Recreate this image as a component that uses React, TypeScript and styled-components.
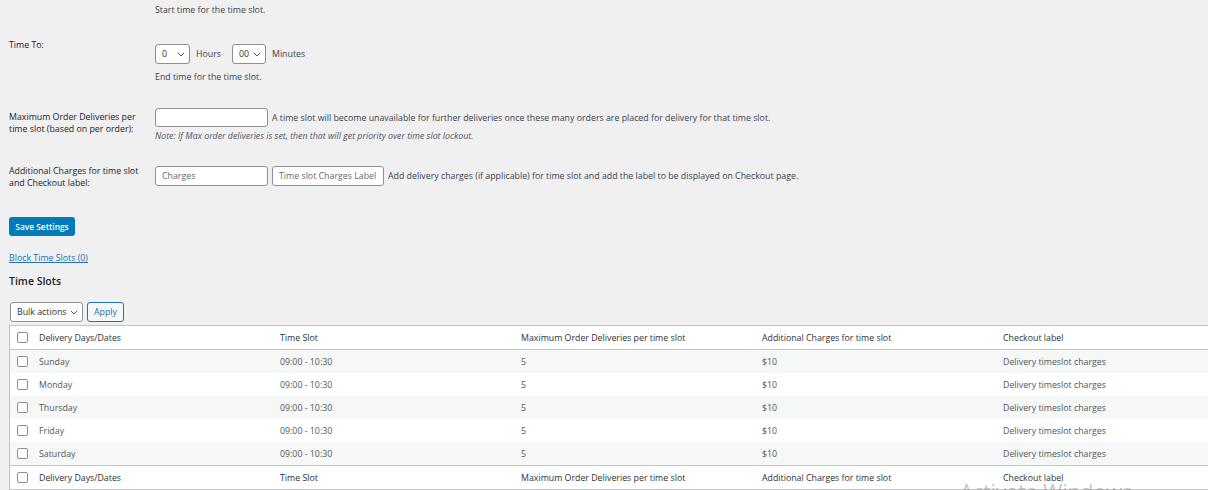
import React from "react";
import styled, { createGlobalStyle } from "styled-components";

const Global = createGlobalStyle`
  html, body { margin: 0; padding: 0; background: #f0f0f1; overflow: hidden; }
  body { font-family: "Open Sans", "Noto Sans", sans-serif; color: #3c434a; font-size: 8.8px; }
`;

const Page = styled.div`
  width: 1300px;
  height: 490px;
  padding-left: 9px;
  box-sizing: border-box;
  display: flex;
  flex-direction: column;
`;

const Desc = styled.div<{ $top: number }>`
  margin-top: ${(p) => p.$top}px;
  margin-left: 146px;
  line-height: 12px;
  color: #3c434a;
`;

const FieldRow = styled.div<{ $top: number }>`
  display: grid;
  grid-template-columns: 146px 1fr;
  margin-top: ${(p) => p.$top}px;
`;

const Label = styled.div<{ $pt: number }>`
  padding-top: ${(p) => p.$pt}px;
  line-height: 12px;
  color: #1d2327;
`;

const Controls = styled.div<{ $pt: number }>`
  padding-top: ${(p) => p.$pt}px;
  display: flex;
  flex-direction: column;
`;

const Line = styled.div`
  display: flex;
  align-items: center;
  gap: 4px;
  line-height: 12px;
`;

const SelectBox = styled.div<{ $w: number }>`
  width: ${(p) => p.$w}px;
  height: 20px;
  box-sizing: border-box;
  border: 1px solid #8c8f94;
  border-radius: 3px;
  background: #fff;
  display: flex;
  align-items: center;
  justify-content: space-between;
  padding: 0 4px 0 6px;
  color: #2c3338;
`;

const Unit = styled.span`
  margin-right: 7px;
  margin-left: 2px;
`;

const Input = styled.div<{ $w: number; $h: number }>`
  width: ${(p) => p.$w}px;
  height: ${(p) => p.$h}px;
  box-sizing: border-box;
  border: 1px solid #8c8f94;
  border-radius: 3px;
  background: #fff;
  display: flex;
  align-items: center;
  padding-left: 6px;
  color: #646970;
  white-space: nowrap;
`;

const Note = styled.div`
  margin-top: 3px;
  line-height: 12px;
  font-style: italic;
  color: #50575e;
`;

const PrimaryButton = styled.button`
  margin-top: 28px;
  align-self: flex-start;
  width: 66px;
  height: 20px;
  border: none;
  border-radius: 3px;
  background: #007cba;
  color: #fff;
  font-family: inherit;
  font-size: 8.4px;
  font-weight: 600;
  padding: 0;
`;

const Link = styled.a`
  margin-top: 16px;
  align-self: flex-start;
  color: #2271b1;
  text-decoration: underline;
  line-height: 12px;
`;

const Heading = styled.h2`
  margin: 10px 0 0;
  font-size: 10.5px;
  line-height: 14px;
  font-weight: 600;
  color: #1d2327;
`;

const BulkBar = styled.div`
  margin-top: 14px;
  display: flex;
  gap: 4px;
  margin-left: 1px;
`;

const SecondaryButton = styled.button`
  height: 20px;
  width: 37px;
  box-sizing: border-box;
  border: 1px solid #2271b1;
  border-radius: 3px;
  background: #f6f7f7;
  color: #2271b1;
  font-family: inherit;
  font-size: 8.8px;
  padding: 0;
`;

const Table = styled.div`
  margin-top: 3px;
  width: 1240px;
  background: #fff;
  border: 1px solid #c3c4c7;
  box-sizing: border-box;
`;

const TRow = styled.div<{ $kind: "head" | "odd" | "even" | "foot" }>`
  display: grid;
  grid-template-columns: 23px repeat(5, 241px);
  align-items: center;
  height: 23px;
  background: ${(p) => (p.$kind === "odd" ? "#f6f7f7" : "#fff")};
  border-bottom: ${(p) => (p.$kind === "head" ? "1px solid #c3c4c7" : "none")};
  border-top: ${(p) => (p.$kind === "foot" ? "1px solid #c3c4c7" : "none")};
  color: ${(p) => (p.$kind === "head" || p.$kind === "foot" ? "#2c3338" : "#50575e")};
`;

const Cell = styled.div`
  padding-left: 6px;
  white-space: nowrap;
`;

const CheckCell = styled.div`
  display: flex;
  padding-left: 7px;
`;

const Check = styled.span`
  width: 11px;
  height: 11px;
  box-sizing: border-box;
  border: 1px solid #8c8f94;
  border-radius: 2px;
  background: #fff;
  display: block;
`;

const Watermark = styled.div`
  position: fixed;
  left: 960px;
  top: 478px;
  font-size: 21px;
  color: rgba(150, 150, 150, 0.55);
  white-space: nowrap;
  font-family: "Open Sans", sans-serif;
  pointer-events: none;
`;

const Chevron = () => (
  <svg width="8" height="5" viewBox="0 0 8 5" fill="none">
    <path d="M0.8 0.8 L4 4 L7.2 0.8" stroke="#50575e" strokeWidth="1" />
  </svg>
);

const cols = [
  "Delivery Days/Dates",
  "Time Slot",
  "Maximum Order Deliveries per time slot",
  "Additional Charges for time slot",
  "Checkout label",
];

const days = ["Sunday", "Monday", "Thursday", "Friday", "Saturday"];

export default function App() {
  return (
    <>
      <Global />
      <Page>
        <Desc $top={4}>Start time for the time slot.</Desc>

        <FieldRow $top={23}>
          <Label $pt={0}>Time To:</Label>
          <Controls $pt={5}>
            <Line>
              <SelectBox $w={35}>
                <span>0</span>
                <Chevron />
              </SelectBox>
              <Unit>Hours</Unit>
              <SelectBox $w={34}>
                <span>00</span>
                <Chevron />
              </SelectBox>
              <Unit>Minutes</Unit>
            </Line>
          </Controls>
        </FieldRow>
        <Desc $top={7}>End time for the time slot.</Desc>

        <FieldRow $top={25}>
          <Label $pt={3}>
            Maximum Order Deliveries per
            <br />
            time slot (based on per order):
          </Label>
          <Controls $pt={0}>
            <Line>
              <Input $w={113} $h={19} />
              <span>
                A time slot will become unavailable for further deliveries once these many orders are placed for delivery for that time slot.
              </span>
            </Line>
            <Note>Note: If Max order deliveries is set, then that will get priority over time slot lockout.</Note>
          </Controls>
        </FieldRow>

        <FieldRow $top={23}>
          <Label $pt={0}>
            Additional Charges for time slot
            <br />
            and Checkout label:
          </Label>
          <Controls $pt={1}>
            <Line>
              <Input $w={113} $h={20}>Charges</Input>
              <Input $w={112} $h={20}>Time slot Charges Label</Input>
              <span>Add delivery charges (if applicable) for time slot and add the label to be displayed on Checkout page.</span>
            </Line>
          </Controls>
        </FieldRow>

        <PrimaryButton>Save Settings</PrimaryButton>
        <Link>Block Time Slots (0)</Link>
        <Heading>Time Slots</Heading>

        <BulkBar>
          <SelectBox $w={73}>
            <span>Bulk actions</span>
            <Chevron />
          </SelectBox>
          <SecondaryButton>Apply</SecondaryButton>
        </BulkBar>

        <Table>
          <TRow $kind="head">
            <CheckCell><Check /></CheckCell>
            {cols.map((c) => (
              <Cell key={c}>{c}</Cell>
            ))}
          </TRow>
          {days.map((d, i) => (
            <TRow key={d} $kind={i % 2 === 0 ? "odd" : "even"}>
              <CheckCell><Check /></CheckCell>
              <Cell>{d}</Cell>
              <Cell>09:00 - 10:30</Cell>
              <Cell>5</Cell>
              <Cell>$10</Cell>
              <Cell>Delivery timeslot charges</Cell>
            </TRow>
          ))}
          <TRow $kind="foot">
            <CheckCell><Check /></CheckCell>
            {cols.map((c) => (
              <Cell key={c}>{c}</Cell>
            ))}
          </TRow>
        </Table>
        <Watermark>Activate Windows</Watermark>
      </Page>
    </>
  );
}
